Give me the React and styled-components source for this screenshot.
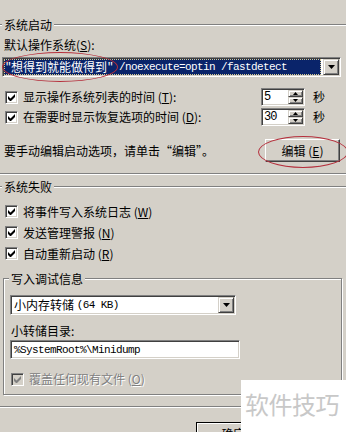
import styled, { createGlobalStyle } from "styled-components";

const GlobalStyle = createGlobalStyle`
  body {
    margin: 0;
    background: #d4d0c8;
  }
`;

const Page = styled.div`
  position: relative;
  box-sizing: border-box;
  width: 346px;
  height: 432px;
  overflow: hidden;
  padding-top: 24px;
  background: #d4d0c8;
  font-family: "Noto Sans CJK SC", "Liberation Sans", sans-serif;
  font-size: 12px;
  line-height: 14px;
  color: #000;
`;

const Group = styled.div`
  box-sizing: border-box;
  display: flex;
  flex-direction: column;
  align-items: flex-start;
  width: ${(p) => p.$w}px;
  margin: ${(p) => p.$mt || 0}px 0 0 ${(p) => p.$ml}px;
  padding: 0 0 ${(p) => p.$pb}px 6px;
  border: 1px solid #808080;
  box-shadow: inset 1px 1px 0 #fff, 1px 1px 0 #fff;
`;

const Legend = styled.div`
  margin: -7px 0 0 ${(p) => p.$ml}px;
  padding: 0 2px;
  background: #d4d0c8;
  white-space: nowrap;
`;

const Label = styled.div`
  margin: ${(p) => p.$mt}px 0 0 ${(p) => p.$ml || 0}px;
  white-space: nowrap;
`;

const Mono = styled.span`
  font-family: "Liberation Mono", monospace;
  font-size: 11px;
  letter-spacing: -0.6px;
`;

const Sunken = styled.div`
  box-sizing: border-box;
  display: flex;
  align-items: center;
  width: ${(p) => p.$w}px;
  height: ${(p) => p.$h}px;
  margin: ${(p) => p.$mt || 0}px 0 0 ${(p) => p.$ml || 0}px;
  padding: 1px;
  background: #fff;
  border: 1px solid;
  border-color: #808080 #fff #fff #808080;
  box-shadow: inset 1px 1px 0 #404040, inset -1px -1px 0 #d4d0c8;
  white-space: nowrap;
`;

const Value = styled.div`
  flex: 1;
  align-self: stretch;
  display: flex;
  align-items: center;
  margin-right: 2px;
  padding-left: ${(p) => p.$pl || 2}px;
  background: ${(p) => (p.$selected ? "#0a246a" : "transparent")};
  color: ${(p) => (p.$selected ? "#fff" : "#000")};
  outline: ${(p) => (p.$selected ? "1px dotted #d8cc90" : "none")};
  outline-offset: -1px;
`;

const Raised = styled.div`
  box-sizing: border-box;
  display: flex;
  align-items: center;
  justify-content: center;
  width: ${(p) => p.$w}px;
  height: ${(p) => p.$h}px;
  background: #d4d0c8;
  border: 1px solid;
  border-color: #d4d0c8 #404040 #404040 #d4d0c8;
  box-shadow: inset 1px 1px 0 #fff, inset -1px -1px 0 #808080;
`;

const SpinButtons = styled.div`
  display: flex;
  flex-direction: column;
  align-self: stretch;
`;

const Button = styled.div`
  box-sizing: border-box;
  display: flex;
  align-items: center;
  justify-content: center;
  width: ${(p) => p.$w}px;
  height: 23px;
  margin: ${(p) => p.$mt || 0}px ${(p) => p.$mr || 0}px 0 ${(p) => p.$ml || 0}px;
  background: #d4d0c8;
  border: 1px solid;
  border-color: ${(p) => (p.$default ? "#000" : "#fff #404040 #404040 #fff")};
  box-shadow: ${(p) =>
    p.$default
      ? "inset 1px 1px 0 #fff, inset -1px -1px 0 #404040, inset -2px -2px 0 #808080"
      : "inset -1px -1px 0 #808080"};
  white-space: nowrap;
`;

const CheckRow = styled.div`
  display: flex;
  align-items: center;
  gap: 5px;
  height: ${(p) => p.$h}px;
  margin: ${(p) => p.$mt || 0}px 0 0 ${(p) => p.$ml || 0}px;
  white-space: nowrap;
  color: ${(p) => (p.$disabled ? "#808080" : "#000")};
  text-shadow: ${(p) => (p.$disabled ? "1px 1px 0 #fff" : "none")};
`;

const Box = styled.div`
  box-sizing: border-box;
  display: flex;
  align-items: center;
  justify-content: center;
  width: 13px;
  height: 13px;
  background: ${(p) => (p.$disabled ? "#d4d0c8" : "#fff")};
  border: 1px solid;
  border-color: #808080 #fff #fff #808080;
  box-shadow: inset 1px 1px 0 #404040, inset -1px -1px 0 #d4d0c8;
`;

const TimeRow = styled.div`
  display: grid;
  grid-template-columns: 248px 44px auto;
  column-gap: 8px;
  align-items: center;
  height: 20px;
  margin: ${(p) => p.$mt || 0}px 0 0 1px;
`;

const EditRow = styled.div`
  display: flex;
  align-items: center;
  justify-content: space-between;
  width: 336px;
  height: 23px;
  margin-top: 12px;
`;

const SpinText = styled.span`
  font-family: "Liberation Mono", monospace;
  font-size: 12px;
  letter-spacing: -1px;
`;

const Ellipse = styled.div`
  position: absolute;
  left: ${(p) => p.$x}px;
  top: ${(p) => p.$y}px;
  width: ${(p) => p.$w}px;
  height: ${(p) => p.$h}px;
  border: 1px solid #b52f3c;
  border-radius: 50%;
  pointer-events: none;
`;

const Watermark = styled.div`
  position: absolute;
  left: 241px;
  top: 380px;
  right: 0;
  bottom: 0;
  padding: 12px 0 0 4px;
  background: #fff;
  color: #c8c8c8;
  font-size: 24px;
  line-height: 24px;
  letter-spacing: -0.5px;
  white-space: nowrap;
`;

function Check({ disabled }) {
  return (
    <Box $disabled={disabled}>
      <svg width="7" height="7" viewBox="0 0 7 7">
        <polygon
          points="0,2 2.5,4.5 7,0 7,3 2.5,7.5 0,5"
          fill={disabled ? "#808080" : "#000"}
        />
      </svg>
    </Box>
  );
}

function Arrow({ w = 7, h = 4, up }) {
  return (
    <svg width={w} height={h} viewBox={`0 0 ${w} ${h}`}>
      <polygon
        points={up ? `0,${h} ${w},${h} ${w / 2},0` : `0,0 ${w},0 ${w / 2},${h}`}
        fill="#000"
      />
    </svg>
  );
}

function Combo({ w, h, mt, ml, selected, children }) {
  return (
    <Sunken $w={w} $h={h} $mt={mt} $ml={ml}>
      <Value $selected={selected} $pl={selected ? 1 : 2}>
        {children}
      </Value>
      <Raised $w={16} $h={h - 4}>
        <Arrow />
      </Raised>
    </Sunken>
  );
}

function Spin({ value }) {
  return (
    <Sunken $w={44} $h={18}>
      <Value $pl={1}>
        <SpinText>{value}</SpinText>
      </Value>
      <SpinButtons>
        <Raised $w={15} $h={8}>
          <Arrow w={5} h={3} up />
        </Raised>
        <Raised $w={15} $h={8}>
          <Arrow w={5} h={3} />
        </Raised>
      </SpinButtons>
    </Sunken>
  );
}

function CheckItem({ children, mt, ml, h = 21, disabled }) {
  return (
    <CheckRow $h={h} $mt={mt} $ml={ml} $disabled={disabled}>
      <Check disabled={disabled} />
      <span>{children}</span>
    </CheckRow>
  );
}

export default function App() {
  return (
    <Page>
      <GlobalStyle />

      <Group $w={420} $ml={-3} $pb={11}>
        <Legend $ml={-2}>系统启动</Legend>
        <Label $mt={6}>
          默认操作系统(<u>S</u>):
        </Label>
        <Combo w={339} h={20} mt={5} ml={-2} selected>
          <Mono>"</Mono>想得到就能做得到<Mono>" /noexecute=optin /fastdetect</Mono>
        </Combo>
        <TimeRow $mt={10}>
          <CheckItem h={20}>
            显示操作系统列表的时间 (<u>T</u>):
          </CheckItem>
          <Spin value="5" />
          <span>秒</span>
        </TimeRow>
        <TimeRow>
          <CheckItem h={20}>
            在需要时显示恢复选项的时间 (<u>D</u>):
          </CheckItem>
          <Spin value="30" />
          <span>秒</span>
        </TimeRow>
        <EditRow>
          <span>要手动编辑启动选项，请单击“编辑”。</span>
          <Button $w={75}>
            编辑 (<u>E</u>)
          </Button>
        </EditRow>
      </Group>

      <Group $w={420} $ml={-3} $mt={12} $pb={11}>
        <Legend $ml={-2}>系统失败</Legend>
        <CheckItem mt={7} ml={1}>
          将事件写入系统日志 (<u>W</u>)
        </CheckItem>
        <CheckItem ml={1}>
          发送管理警报 (<u>N</u>)
        </CheckItem>
        <CheckItem ml={1}>
          自动重新启动 (<u>R</u>)
        </CheckItem>

        <Group $w={339} $ml={-1} $mt={14} $pb={5}>
          <Legend $ml={-1}>写入调试信息</Legend>
          <Combo w={226} h={20} mt={9}>
            小内存转储&nbsp;<Mono>(64 KB)</Mono>
          </Combo>
          <Label $mt={9} $ml={1}>
            小转储目录:
          </Label>
          <Sunken $w={230} $h={19} $mt={2}>
            <Value>
              <Mono>%SystemRoot%\Minidump</Mono>
            </Value>
          </Sunken>
          <CheckItem mt={10} ml={1} h={20} disabled>
            覆盖任何现有文件 (<u>O</u>)
          </CheckItem>
        </Group>
      </Group>

      <Button $w={75} $mt={15} $ml={196} $default>
        确定
      </Button>

      <Ellipse $x={2} $y={52} $w={114} $h={28} />
      <Ellipse $x={258} $y={136} $w={88} $h={30} />
      <Watermark>软件技巧</Watermark>
    </Page>
  );
}
